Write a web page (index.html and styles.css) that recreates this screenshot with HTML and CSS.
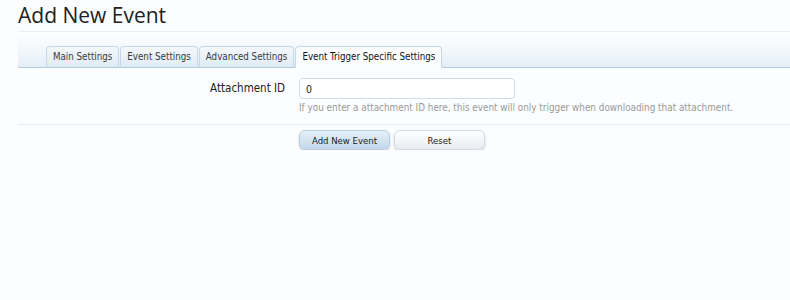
FILE: index.html
```html
<!DOCTYPE html>
<html>
<head>
<meta charset="utf-8">
<link rel="stylesheet" href="styles.css">
</head>
<body>
<div class="page">
  <h1 class="title">Add New Event</h1>
  <div class="tabbar">
    <ul class="tabs">
      <li class="tab">Main Settings</li>
      <li class="tab">Event Settings</li>
      <li class="tab">Advanced Settings</li>
      <li class="tab active">Event Trigger Specific Settings</li>
    </ul>
  </div>
  <div class="form-row">
    <label class="label">Attachment ID</label>
    <div class="field">
      <input class="input" type="text" value="0">
      <p class="hint">If you enter a attachment ID here, this event will only trigger when downloading that attachment.</p>
    </div>
  </div>
  <div class="submit-row">
    <button class="btn primary">Add New Event</button>
    <button class="btn">Reset</button>
  </div>
</div>
</body>
</html>
```
FILE: styles.css
```css
html, body {
  margin: 0;
  padding: 0;
  background: #fcfdfe;
}
body {
  font-family: "DejaVu Sans Condensed", "DejaVu Sans", Tahoma, sans-serif;
  font-size: 10px;
  color: #222;
}
.page {
  padding-left: 18px;
}
.title {
  margin: 0;
  padding-top: 2px;
  height: 29px;
  font-family: "Open Sans", "DejaVu Sans", sans-serif;
  font-weight: normal;
  font-size: 21px;
  line-height: 26px;
  color: #222;
  border-bottom: 1px solid #e9eff4;
}
.tabbar {
  height: 35px;
  background: linear-gradient(to bottom, #fdfeff 0%, #f3f8fc 50%, #e3eef7 100%);
  border-bottom: 1px solid #b3cde0;
  display: flex;
  align-items: flex-end;
}
.tabs {
  list-style: none;
  margin: 0 0 -1px 28px;
  padding: 0;
  display: flex;
}
.tab {
  height: 20px;
  line-height: 20px;
  padding: 0 6px;
  margin-right: 1px;
  border: 1px solid #c5d7e5;
  border-bottom: 1px solid #b3cde0;
  border-radius: 4px 4px 0 0;
  background: linear-gradient(to bottom, #f3f8fc, #dfebf4);
  color: #3a3a3a;
  font-size: 9.7px;
  white-space: nowrap;
}
.tab.active {
  background: #fcfdfe;
  border-bottom-color: #fcfdfe;
  color: #111;
}
.form-row {
  display: flex;
  padding-top: 10px;
  height: 46px;
  border-bottom: 1px solid #e6eef3;
}
.label {
  width: 267px;
  text-align: right;
  font-size: 11.5px;
  line-height: 21px;
  color: #222;
  padding-right: 14px;
}
.field {
  display: flex;
  flex-direction: column;
}
.input {
  box-sizing: border-box;
  width: 216px;
  height: 21px;
  margin: 0;
  padding: 0 6px;
  border: 1px solid #cfdbe5;
  border-radius: 4px;
  background: #fff;
  font-family: "DejaVu Sans Condensed", "DejaVu Sans", Tahoma, sans-serif;
  font-size: 10.5px;
  color: #222;
}
.hint {
  margin: 3px 0 0;
  font-size: 9.85px;
  color: #9a9a9a;
  white-space: nowrap;
}
.submit-row {
  display: flex;
  gap: 4px;
  padding: 5px 0 0 281px;
}
.btn {
  box-sizing: border-box;
  width: 91px;
  height: 20px;
  padding: 0;
  border: 1px solid #d4dce4;
  border-radius: 6px;
  background: linear-gradient(to bottom, #ffffff, #e8edf2);
  box-shadow: 0 1px 2px rgba(80,100,130,0.35);
  font-family: "DejaVu Sans Condensed", "DejaVu Sans", Tahoma, sans-serif;
  font-size: 9.5px;
  color: #222;
}
.btn.primary {
  border-color: #b9cfe1;
  background: linear-gradient(to bottom, #e6f0f8, #c3d8ea);
}
```
